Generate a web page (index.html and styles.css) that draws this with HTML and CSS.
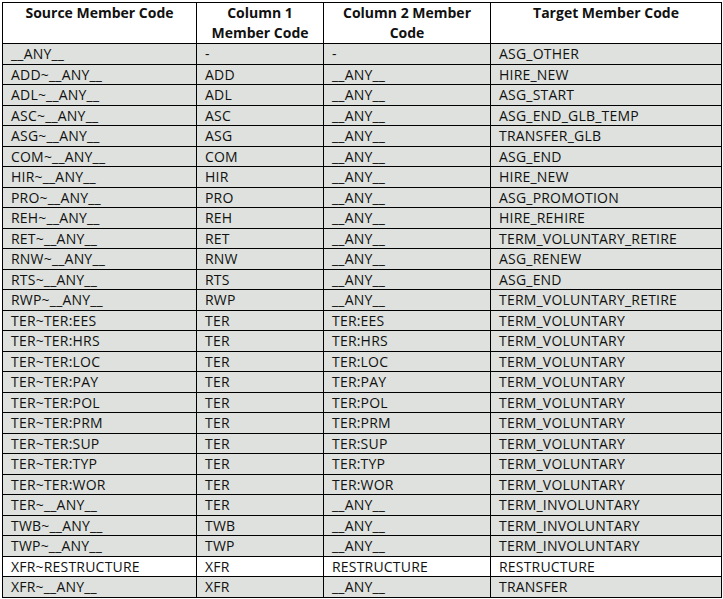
FILE: index.html
```html
<!DOCTYPE html>
<html>
<head>
<meta charset="utf-8">
<link rel="stylesheet" href="styles.css">
</head>
<body>
<table class="map">
  <colgroup>
    <col class="c1"><col class="c2"><col class="c3"><col class="c4">
  </colgroup>
  <thead>
    <tr class="head">
      <th>Source Member Code</th>
      <th>Column 1<br>Member Code</th>
      <th>Column 2 Member<br>Code</th>
      <th>Target Member Code</th>
    </tr>
  </thead>
  <tbody>
    <tr><td>__ANY__</td><td>-</td><td>-</td><td>ASG_OTHER</td></tr>
    <tr><td>ADD~__ANY__</td><td>ADD</td><td>__ANY__</td><td>HIRE_NEW</td></tr>
    <tr><td>ADL~__ANY__</td><td>ADL</td><td>__ANY__</td><td>ASG_START</td></tr>
    <tr><td>ASC~__ANY__</td><td>ASC</td><td>__ANY__</td><td>ASG_END_GLB_TEMP</td></tr>
    <tr><td>ASG~__ANY__</td><td>ASG</td><td>__ANY__</td><td>TRANSFER_GLB</td></tr>
    <tr><td>COM~__ANY__</td><td>COM</td><td>__ANY__</td><td>ASG_END</td></tr>
    <tr><td>HIR~__ANY__</td><td>HIR</td><td>__ANY__</td><td>HIRE_NEW</td></tr>
    <tr><td>PRO~__ANY__</td><td>PRO</td><td>__ANY__</td><td>ASG_PROMOTION</td></tr>
    <tr><td>REH~__ANY__</td><td>REH</td><td>__ANY__</td><td>HIRE_REHIRE</td></tr>
    <tr><td>RET~__ANY__</td><td>RET</td><td>__ANY__</td><td>TERM_VOLUNTARY_RETIRE</td></tr>
    <tr><td>RNW~__ANY__</td><td>RNW</td><td>__ANY__</td><td>ASG_RENEW</td></tr>
    <tr><td>RTS~__ANY__</td><td>RTS</td><td>__ANY__</td><td>ASG_END</td></tr>
    <tr><td>RWP~__ANY__</td><td>RWP</td><td>__ANY__</td><td>TERM_VOLUNTARY_RETIRE</td></tr>
    <tr><td>TER~TER:EES</td><td>TER</td><td>TER:EES</td><td>TERM_VOLUNTARY</td></tr>
    <tr><td>TER~TER:HRS</td><td>TER</td><td>TER:HRS</td><td>TERM_VOLUNTARY</td></tr>
    <tr><td>TER~TER:LOC</td><td>TER</td><td>TER:LOC</td><td>TERM_VOLUNTARY</td></tr>
    <tr><td>TER~TER:PAY</td><td>TER</td><td>TER:PAY</td><td>TERM_VOLUNTARY</td></tr>
    <tr><td>TER~TER:POL</td><td>TER</td><td>TER:POL</td><td>TERM_VOLUNTARY</td></tr>
    <tr><td>TER~TER:PRM</td><td>TER</td><td>TER:PRM</td><td>TERM_VOLUNTARY</td></tr>
    <tr><td>TER~TER:SUP</td><td>TER</td><td>TER:SUP</td><td>TERM_VOLUNTARY</td></tr>
    <tr><td>TER~TER:TYP</td><td>TER</td><td>TER:TYP</td><td>TERM_VOLUNTARY</td></tr>
    <tr><td>TER~TER:WOR</td><td>TER</td><td>TER:WOR</td><td>TERM_VOLUNTARY</td></tr>
    <tr><td>TER~__ANY__</td><td>TER</td><td>__ANY__</td><td>TERM_INVOLUNTARY</td></tr>
    <tr><td>TWB~__ANY__</td><td>TWB</td><td>__ANY__</td><td>TERM_INVOLUNTARY</td></tr>
    <tr><td>TWP~__ANY__</td><td>TWP</td><td>__ANY__</td><td>TERM_INVOLUNTARY</td></tr>
    <tr class="plain"><td>XFR~RESTRUCTURE</td><td>XFR</td><td>RESTRUCTURE</td><td>RESTRUCTURE</td></tr>
    <tr><td>XFR~__ANY__</td><td>XFR</td><td>__ANY__</td><td>TRANSFER</td></tr>
  </tbody>
</table>
</body>
</html>
```

FILE: styles.css
```css
html, body {
  margin: 0;
  padding: 0;
  background: #ffffff;
}

body {
  padding: 2px 0 0 2px;
  font-family: "Open Sans", "Noto Sans", sans-serif;
  font-size: 14px;
  color: #111111;
}

.map {
  border-collapse: collapse;
  table-layout: fixed;
  width: 719px;
}

.c1 { width: 194px; }
.c2 { width: 127px; }
.c3 { width: 167px; }
.c4 { width: 231px; }

.map th,
.map td {
  border: 1px solid #000;
  line-height: 20px;
  padding: 0 0 0 8px;
  white-space: nowrap;
  overflow: hidden;
}

.map th {
  font-weight: 700;
  text-align: center;
  vertical-align: top;
  padding: 0;
  height: 40px;
  background: #ffffff;
}

.map td {
  background: #dee1dd;
  height: 20px;
  vertical-align: top;
  letter-spacing: 0.2px;
}

.map tbody tr:nth-child(even) td {
  height: 19px;
  line-height: 19px;
}

.map tr.plain td {
  background: #ffffff;
}
```
